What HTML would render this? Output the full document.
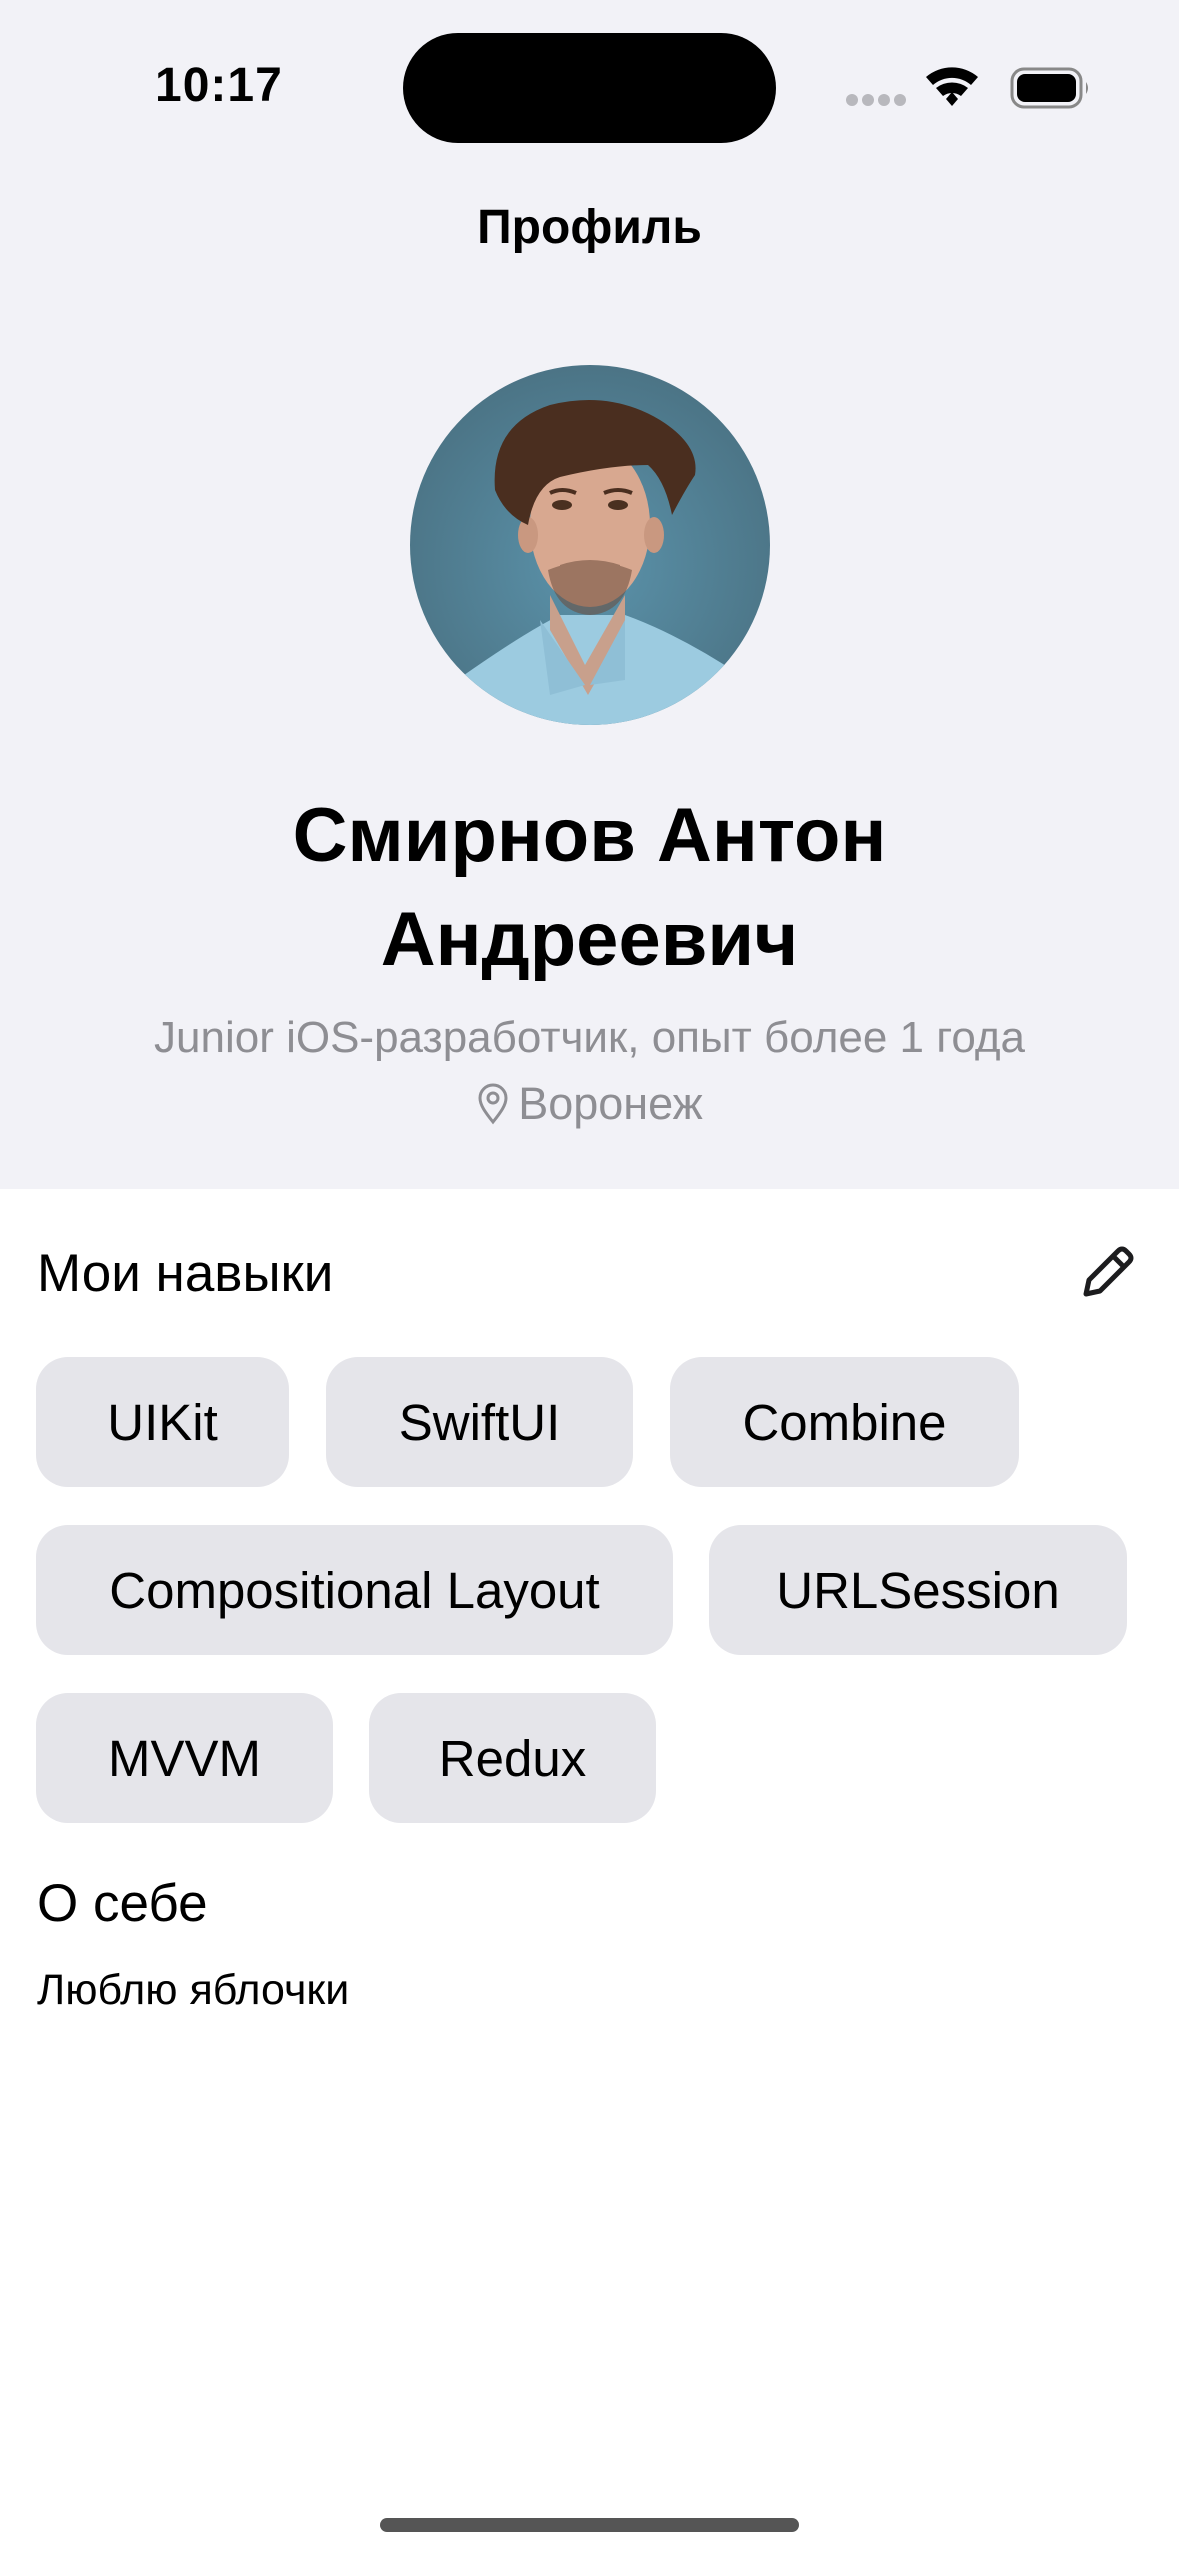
<!DOCTYPE html>
<html><head><meta charset="utf-8">
<style>
*{margin:0;padding:0;box-sizing:border-box}
html,body{width:1179px;height:2556px;overflow:hidden;background:#fff}
body{position:relative;font-family:"Liberation Sans","Noto Sans CJK SC",sans-serif;color:#000}
.top{position:absolute;left:0;top:0;width:1179px;height:1189px;background:#f2f2f7}
.abs{position:absolute}
.c{left:0;width:1179px;text-align:center}
.chip{position:absolute;background:#e5e5ea;border-radius:32px;height:130px;display:flex;align-items:center;justify-content:center;font-size:51px;color:#000}
</style></head><body>
<div class="top"></div>
<div class="abs" style="left:155px;top:58px;font-size:48px;font-weight:bold;letter-spacing:1px">10:17</div>
<div class="abs" style="left:403px;top:33px;width:373px;height:110px;border-radius:55px;background:#000"></div>
<svg class="abs" style="left:840px;top:58px" width="250" height="60" viewBox="0 0 250 60">
<g fill="#b8b8bd"><circle cx="12" cy="42" r="6"/><circle cx="28" cy="42" r="6"/><circle cx="44" cy="42" r="6"/><circle cx="60" cy="42" r="6"/></g>
<path d="M86 19 A40 40 0 0 1 138 19 L131 27 A29 29 0 0 0 93 27 Z" fill="#000"/>
<path d="M96 30 A26 26 0 0 1 128 30 L121 38 A15 15 0 0 0 103 38 Z" fill="#000"/>
<path d="M106 41 L112 34 L118 41 L112 48 Z" fill="#000"/>
<rect x="172" y="11" width="69" height="38" rx="12" fill="none" stroke="#888" stroke-width="3"/>
<rect x="177" y="16" width="59" height="28" rx="8" fill="#000"/>
<path d="M246 24 Q250 30 246 36 Z" fill="#888"/>
</svg>
<div class="abs c" style="top:200px;font-size:48px;font-weight:bold">Профиль</div>
<svg class="abs" style="left:410px;top:365px" width="360" height="360" viewBox="0 0 360 360">
<defs><clipPath id="cp"><circle cx="180" cy="180" r="180"/></clipPath>
<radialGradient id="bg" cx="50%" cy="55%" r="60%"><stop offset="0" stop-color="#5b93ab"/><stop offset="1" stop-color="#4a7182"/></radialGradient></defs>
<g clip-path="url(#cp)">
<rect width="360" height="360" fill="url(#bg)"/>
<path d="M40 320 Q110 270 150 250 L215 250 Q270 270 330 310 L360 360 L0 360 Z" fill="#9ccbe0"/>
<path d="M140 230 L175 300 L215 230 L215 265 L178 330 L140 265 Z" fill="#c8a08c"/>
<path d="M130 255 L175 320 L140 330 Z M215 255 L180 320 L215 315 Z" fill="#8fbfd6"/>
<ellipse cx="180" cy="160" rx="60" ry="82" fill="#d8a890"/>
<ellipse cx="118" cy="170" rx="10" ry="18" fill="#c99880"/><ellipse cx="244" cy="170" rx="10" ry="18" fill="#c99880"/>
<path d="M85 125 Q80 60 140 40 Q200 25 250 55 Q290 80 285 110 Q275 125 262 150 Q255 115 238 100 Q200 100 150 112 Q125 120 118 160 Q95 150 85 125 Z" fill="#4a2e1f"/>
<path d="M138 205 Q180 188 222 205 Q215 248 180 250 Q145 248 138 205 Z M150 200 Q180 190 210 200 L210 208 Q180 200 150 208 Z" fill="#6b4a3a" opacity=".55"/>
<ellipse cx="152" cy="140" rx="10" ry="5" fill="#4a3020"/><ellipse cx="208" cy="140" rx="10" ry="5" fill="#4a3020"/>
<path d="M140 128 Q152 122 166 128 M194 128 Q208 122 222 128" stroke="#4a2e1f" stroke-width="4" fill="none"/>
</g></svg>
<div class="abs c" style="top:784px;font-size:76px;font-weight:bold;line-height:104px">Смирнов Антон<br>Андреевич</div>
<div class="abs c" style="top:1013px;font-size:44px;color:#8e8e93">Junior iOS-разработчик, опыт более 1 года</div>
<div class="abs c" style="top:1078px;font-size:45px;color:#8e8e93"><svg width="34" height="42" viewBox="0 0 34 42" style="vertical-align:-6px;margin-right:8px"><path d="M17 39 C9 29 4 22 4 15 A13 13 0 0 1 30 15 C30 22 25 29 17 39 Z" fill="none" stroke="#8e8e93" stroke-width="3"/><circle cx="17" cy="15" r="5" fill="none" stroke="#8e8e93" stroke-width="3"/></svg>Воронеж</div>
<div class="abs" style="left:37px;top:1243px;font-size:53px">Мои навыки</div>
<svg class="abs" style="left:1078px;top:1242px" width="60" height="60" viewBox="0 0 60 60"><path d="M8 52 L11 38 L40 9 Q44 5 48 9 L51 12 Q55 16 51 20 L22 49 Z M35 14 L46 25" fill="none" stroke="#1c1c1e" stroke-width="5" stroke-linejoin="round"/></svg>
<div class="chip" style="left:36px;top:1357px;width:253px">UIKit</div>
<div class="chip" style="left:326px;top:1357px;width:307px">SwiftUI</div>
<div class="chip" style="left:670px;top:1357px;width:349px">Combine</div>
<div class="chip" style="left:36px;top:1525px;width:637px">Compositional Layout</div>
<div class="chip" style="left:709px;top:1525px;width:418px">URLSession</div>
<div class="chip" style="left:36px;top:1693px;width:297px">MVVM</div>
<div class="chip" style="left:369px;top:1693px;width:287px">Redux</div>
<div class="abs" style="left:37px;top:1873px;font-size:53px">О себе</div>
<div class="abs" style="left:37px;top:1966px;font-size:43px">Люблю яблочки</div>
<div class="abs" style="left:380px;top:2518px;width:419px;height:14px;border-radius:7px;background:#555"></div>
</body></html>
